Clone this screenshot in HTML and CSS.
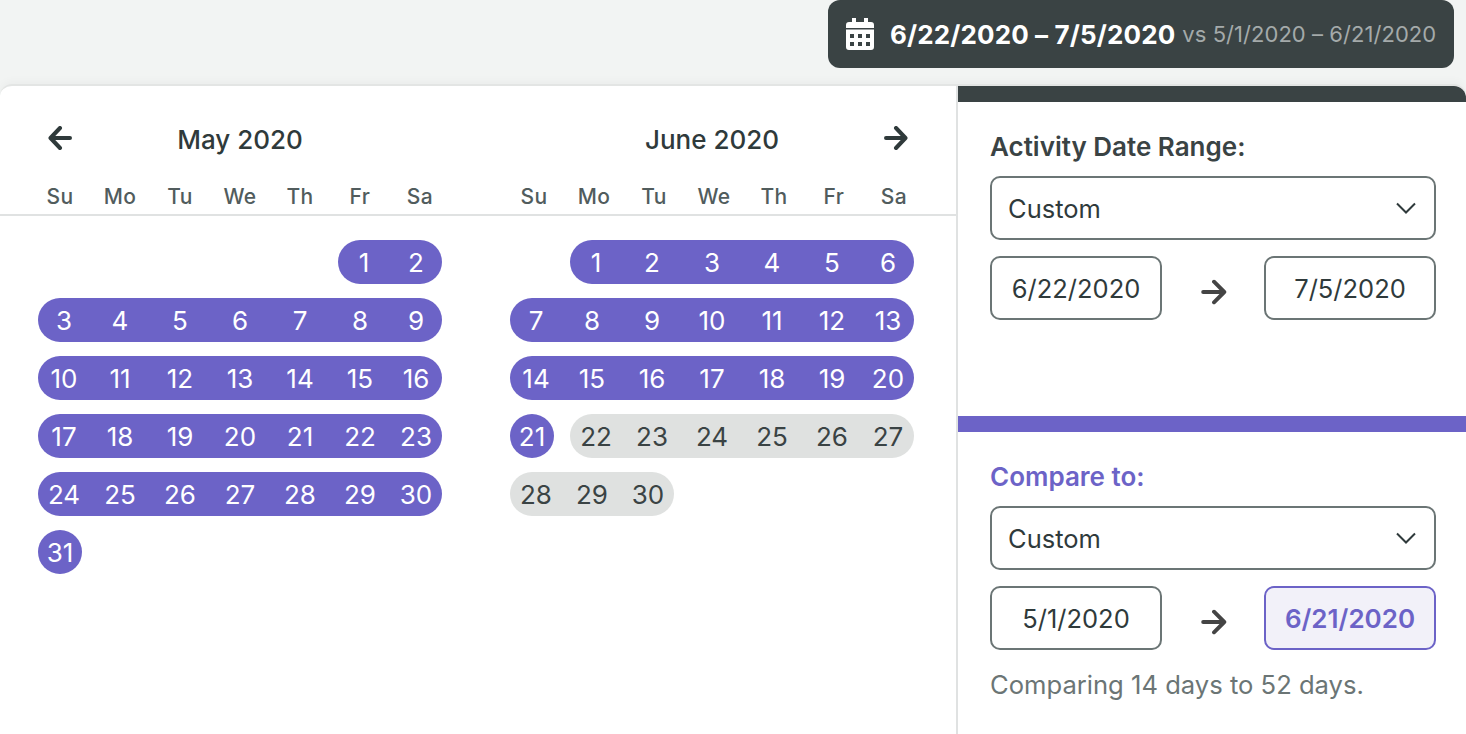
FILE: index.html
```html
<!DOCTYPE html>
<html lang="en">
<head>
<meta charset="utf-8">
<title>Date range picker</title>
<link rel="stylesheet" href="styles.css">
</head>
<body>
<header class="topbar">
  <div class="range-button">
    <svg class="cal-icon" viewBox="0 0 28 32" aria-hidden="true"><path fill="#fff" fill-rule="evenodd" d="M6 0h4v4h8V0h4v4h3A3 3 0 0 1 28 7v3H0V7a3 3 0 0 1 3-3h3zM0 11.500h28V29a3 3 0 0 1-3 3H3a3 3 0 0 1-3-3zM4 16v4h4v-4zm8 0v4h4v-4zm8 0v4h4v-4zM4 24v4h4v-4zm8 0v4h4v-4zm8 0v4h4v-4z"/></svg>
    <span class="range-main">6/22/2020 – 7/5/2020</span>
    <span class="range-vs">vs 5/1/2020 – 6/21/2020</span>
  </div>
</header>
<main class="picker">
  <section class="calendars">
    <div class="months">
      <div class="month">
        <div class="month-head">
          <svg class="nav" viewBox="0 0 24 24" aria-hidden="true"><path d="M22 12H3M12 2 2.500 12l9.500 10"/></svg>
          <h2>May 2020</h2>
          <span class="nav-spacer"></span>
        </div>
        <div class="weekdays"><span>Su</span><span>Mo</span><span>Tu</span><span>We</span><span>Th</span><span>Fr</span><span>Sa</span></div>
      </div>
      <div class="month month-june">
        <div class="month-head">
          <span class="nav-spacer"></span>
          <h2>June 2020</h2>
          <svg class="nav" viewBox="0 0 24 24" aria-hidden="true"><path d="M2 12h19M12 2l9.500 10L12 22"/></svg>
        </div>
        <div class="weekdays"><span>Su</span><span>Mo</span><span>Tu</span><span>We</span><span>Th</span><span>Fr</span><span>Sa</span></div>
      </div>
    </div>
    <div class="grids">
      <div class="grid">
        <span class="d p s c6">1</span><span class="d p e">2</span>
        <span class="d p s">3</span><span class="d p">4</span><span class="d p">5</span><span class="d p">6</span><span class="d p">7</span><span class="d p">8</span><span class="d p e">9</span>
        <span class="d p s">10</span><span class="d p">11</span><span class="d p">12</span><span class="d p">13</span><span class="d p">14</span><span class="d p">15</span><span class="d p e">16</span>
        <span class="d p s">17</span><span class="d p">18</span><span class="d p">19</span><span class="d p">20</span><span class="d p">21</span><span class="d p">22</span><span class="d p e">23</span>
        <span class="d p s">24</span><span class="d p">25</span><span class="d p">26</span><span class="d p">27</span><span class="d p">28</span><span class="d p">29</span><span class="d p e">30</span>
        <span class="d p s e">31</span>
      </div>
      <div class="grid">
        <span class="d p s c2">1</span><span class="d p">2</span><span class="d p">3</span><span class="d p">4</span><span class="d p">5</span><span class="d p e">6</span>
        <span class="d p s">7</span><span class="d p">8</span><span class="d p">9</span><span class="d p">10</span><span class="d p">11</span><span class="d p">12</span><span class="d p e">13</span>
        <span class="d p s">14</span><span class="d p">15</span><span class="d p">16</span><span class="d p">17</span><span class="d p">18</span><span class="d p">19</span><span class="d p e">20</span>
        <span class="d p s e">21</span><span class="d g s">22</span><span class="d g">23</span><span class="d g">24</span><span class="d g">25</span><span class="d g">26</span><span class="d g e">27</span>
        <span class="d g s">28</span><span class="d g">29</span><span class="d g e">30</span>
      </div>
    </div>
  </section>
  <aside class="sidebar">
    <section class="group group-primary">
      <h3 class="label">Activity Date Range:</h3>
      <div class="select"><span>Custom</span><svg class="chev" viewBox="0 0 20 12" aria-hidden="true"><path d="M1 1.500l9 9 9-9"/></svg></div>
      <div class="dates">
        <div class="date">6/22/2020</div>
        <svg class="to" viewBox="0 0 24 24" aria-hidden="true"><path d="M2 12h19M12 2.500l9.500 9.500-9.500 9.500"/></svg>
        <div class="date">7/5/2020</div>
      </div>
    </section>
    <section class="group group-compare">
      <h3 class="label label-compare">Compare to:</h3>
      <div class="select"><span>Custom</span><svg class="chev" viewBox="0 0 20 12" aria-hidden="true"><path d="M1 1.500l9 9 9-9"/></svg></div>
      <div class="dates">
        <div class="date">5/1/2020</div>
        <svg class="to" viewBox="0 0 24 24" aria-hidden="true"><path d="M2 12h19M12 2.500l9.500 9.500-9.500 9.500"/></svg>
        <div class="date date-active">6/21/2020</div>
      </div>
      <p class="hint">Comparing 14 days to 52 days.</p>
    </section>
  </aside>
</main>
</body>
</html>
```

FILE: styles.css
```css
* { box-sizing: border-box; }
html, body { height: 100%; }
body {
  margin: 0;
  overflow: hidden;
  background: #f2f4f3;
  color: #2f3a3b;
  font-family: Inter, "Liberation Sans", sans-serif;
}
.topbar {
  display: flex;
  justify-content: flex-end;
  padding-right: 12px;
  height: 84px;
}
.range-button {
  display: flex;
  align-items: center;
  width: 626px;
  height: 68px;
  padding-left: 18px;
  background: #3a4344;
  border-radius: 12px;
  color: #fff;
}
.cal-icon { width: 28px; height: 32px; margin-right: 16px; flex: none; }
.range-main { font-size: 26px; font-weight: 700; letter-spacing: 0.13px; margin-right: 7px; }
.range-vs { font-size: 22px; letter-spacing: 0.05px; color: #a4aaaa; }
.picker {
  display: flex;
  height: 650px;
  background: #fff;
  border-top: 2px solid #e3e5e4;
  border-radius: 12px 12px 0 0;
  box-shadow: 0 -3px 8px rgba(0, 0, 0, 0.03);
}
.calendars {
  width: 958px;
  flex: none;
  border-right: 2px solid #e0e2e2;
}
.months { display: flex; height: 130px; border-bottom: 2px solid #e0e2e2; }
.month { width: 480px; padding: 0 30px; }
.month-june { width: 476px; padding: 0 32px 0 24px; }
.month-head {
  display: flex;
  align-items: center;
  justify-content: space-between;
  height: 64px;
  margin-top: 21px;
  padding: 0 18px;
}
.month-june .month-head { padding: 0 16px 0 12px; }
.month-head h2 { margin: 0; font-size: 26px; font-weight: 500; color: #2f3a3b; }
.nav { width: 24px; height: 24px; margin-top: -2px; fill: none; stroke: #2f3a3b; stroke-width: 4; stroke-linecap: round; stroke-linejoin: round; }
.nav-spacer { width: 24px; }
.weekdays { display: grid; grid-template-columns: repeat(7, 60px); height: 34px; margin-top: 8px; align-items: center; }
.weekdays span { text-align: center; font-size: 21px; letter-spacing: .4px; font-weight: 500; color: #515c5d; }
.grids { display: flex; padding: 24px 0 0 30px; gap: 52px; }
.grid { display: grid; grid-template-columns: repeat(7, 60px); grid-auto-rows: 44px; row-gap: 14px; width: 420px; }
.d {
  display: flex;
  align-items: center;
  justify-content: center;
  font-size: 26px;
}
.p { background: #6c63c7; color: #fff; }
.g { background: #dfe1e0; color: #3a4344; }
.s { margin-left: 8px; border-top-left-radius: 22px; border-bottom-left-radius: 22px; }
.e { margin-right: 8px; border-top-right-radius: 22px; border-bottom-right-radius: 22px; }
.c2 { grid-column-start: 2; }
.c6 { grid-column-start: 6; }
.sidebar { flex: 1; min-width: 0; border-radius: 0 12px 0 0; overflow: hidden; }
.group { padding: 28px 30px 0 32px; }
.group-primary { height: 330px; border-top: 16px solid #3a4344; }
.group-compare { border-top: 16px solid #6c63c7; }
.label { margin: 0 0 12px; font-size: 26px; line-height: 34px; font-weight: 600; color: #3a4344; }
.label-compare { color: #6c63c7; }
.select {
  display: flex;
  align-items: center;
  justify-content: space-between;
  height: 64px;
  padding: 0 18px 0 16px;
  border: 2px solid #6b7575;
  border-radius: 10px;
  font-size: 25.500px;
  color: #2f3a3b;
}
.chev { width: 20px; height: 12px; fill: none; stroke: #2f3a3b; stroke-width: 2; }
.dates { display: flex; align-items: center; justify-content: space-between; margin-top: 16px; }
.date {
  display: flex;
  align-items: center;
  justify-content: center;
  width: 172px;
  height: 64px;
  border: 2px solid #6b7575;
  border-radius: 10px;
  font-size: 25.500px;
  color: #2f3a3b;
}
.to { width: 26px; height: 26px; margin: 7px 0 0 2px; fill: none; stroke: #444; stroke-width: 3.600; stroke-linecap: round; stroke-linejoin: round; }
.date-active { background: #f2f1f9; border-color: #6c63c7; color: #6c63c7; font-size: 26px; font-weight: 600; }
.hint { margin: 18px 0 0; font-size: 25.600px; line-height: 34px; color: #6b7575; }
```
